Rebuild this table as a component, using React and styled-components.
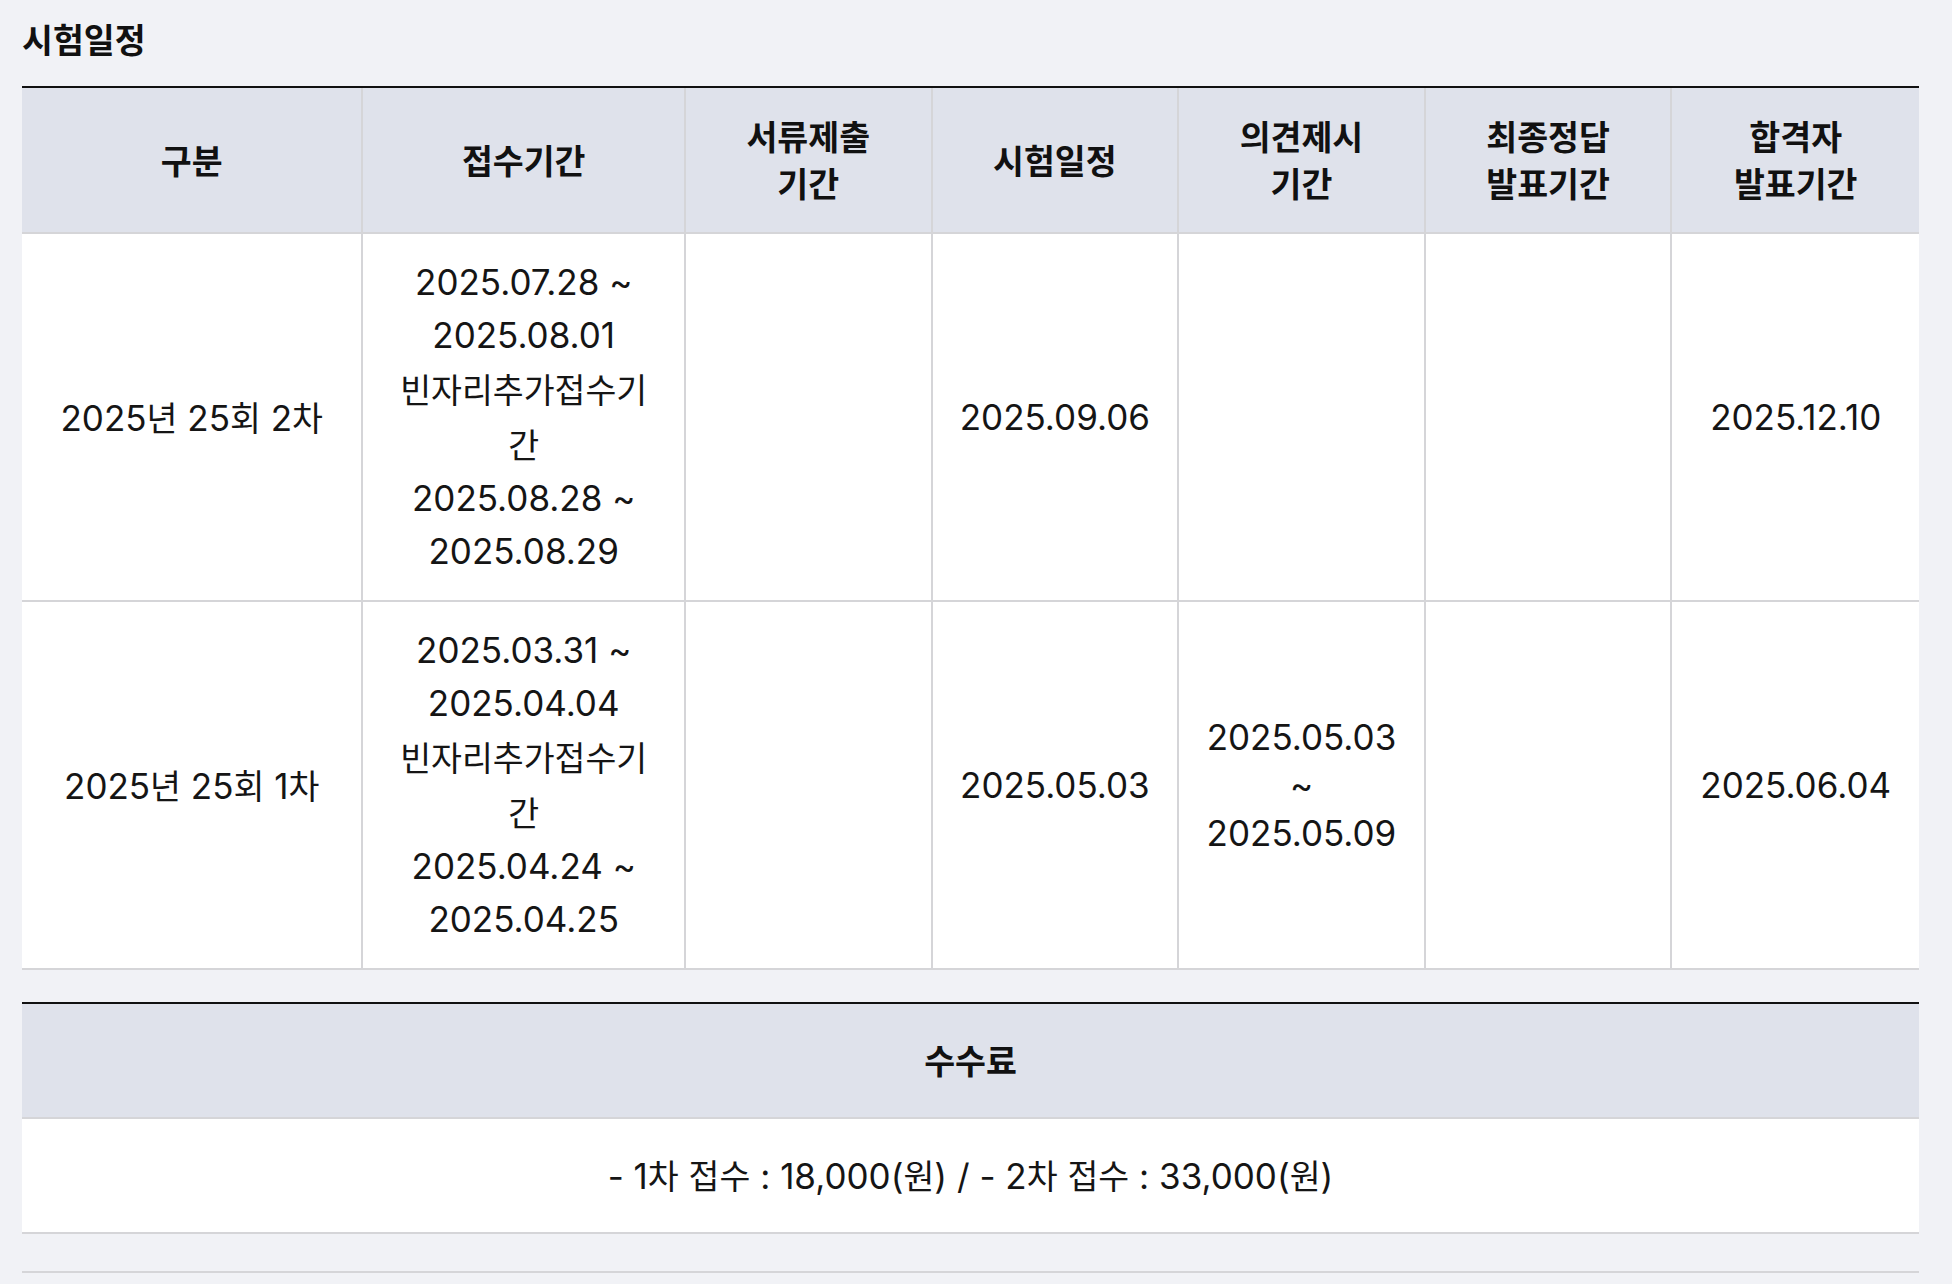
import React from 'react'
import styled, { createGlobalStyle } from 'styled-components'

const GlobalStyle = createGlobalStyle`
html, body {
    margin: 0;
    padding: 0;
    background: #f1f2f6;
}
body {
    font-family: Inter, "Noto Sans CJK KR", sans-serif;
    color: #111;
}
`

// hangul runs get their own span so they keep pretendard-like proportions
const HANGUL = /([\u1100-\u11ff\u3130-\u318f\uac00-\ud7a3]+)/

const Txt = ({ children }) => {
    return String(children).split(HANGUL).map((part, i) => (
        HANGUL.test(part) ? <Hangul key={i}>{part}</Hangul> : part
    ))
}

const COLUMNS = ['18%', '17%', '13%', '13%', '13%', '13%', '13%']

const HEADS = [
    ['구분'],
    ['접수기간'],
    ['서류제출', '기간'],
    ['시험일정'],
    ['의견제시', '기간'],
    ['최종정답', '발표기간'],
    ['합격자', '발표기간'],
]

const ROWS = [
    {
        name: '2025년 25회 2차',
        apply: ['2025.07.28 ~ 2025.08.01', '빈자리추가접수기간', '2025.08.28 ~ 2025.08.29'],
        docs: '',
        exam: '2025.09.06',
        opinion: '',
        answer: '',
        pass: '2025.12.10',
    },
    {
        name: '2025년 25회 1차',
        apply: ['2025.03.31 ~ 2025.04.04', '빈자리추가접수기간', '2025.04.24 ~ 2025.04.25'],
        docs: '',
        exam: '2025.05.03',
        opinion: '2025.05.03 ~ 2025.05.09',
        answer: '',
        pass: '2025.06.04',
    },
]

const Lines = ({ lines }) => lines.map((line, j) => (
    <React.Fragment key={j}>
        {j > 0 && <br />}
        <Txt>{line}</Txt>
    </React.Fragment>
))

const App = () => {
    return (
        <Page>
            <GlobalStyle />
            <Title><Txt>시험일정</Txt></Title>
            <Table>
                <colgroup>
                    {COLUMNS.map((w, i) => <Col key={i} $width={w} />)}
                </colgroup>
                <thead>
                    <tr>
                        {HEADS.map((lines, i) => (
                            <Th key={i}><Lines lines={lines} /></Th>
                        ))}
                    </tr>
                </thead>
                <tbody>
                    {ROWS.map((row, i) => (
                        <tr key={i}>
                            <Td><Txt>{row.name}</Txt></Td>
                            <Td $tall><Lines lines={row.apply} /></Td>
                            <Td><Txt>{row.docs}</Txt></Td>
                            <Td><Txt>{row.exam}</Txt></Td>
                            <Td><Txt>{row.opinion}</Txt></Td>
                            <Td><Txt>{row.answer}</Txt></Td>
                            <Td><Txt>{row.pass}</Txt></Td>
                        </tr>
                    ))}
                </tbody>
            </Table>

            <FeeTable>
                <thead>
                    <tr>
                        <FeeTh><Txt>수수료</Txt></FeeTh>
                    </tr>
                </thead>
                <tbody>
                    <tr>
                        <FeeTd><Txt>- 1차 접수 : 18,000(원) / - 2차 접수 : 33,000(원)</Txt></FeeTd>
                    </tr>
                </tbody>
            </FeeTable>
            <Divider />
        </Page>
    )
}

export default App

const Page = styled.div`
width: 1897px;
padding: 15px 0 40px 22px;
`
const Hangul = styled.span`
font-family: "Noto Sans CJK KR", sans-serif;
font-size: 0.96em;
`
const Title = styled.h2`
margin: 0 0 22px;
font-size: 35px;
line-height: 48px;
font-weight: 700;
color: #111;
`
const Table = styled.table`
width: 100%;
table-layout: fixed;
border-collapse: separate;
border-spacing: 0;
border-top: 2px solid #111;
`
const Col = styled.col`
width: ${props => props.$width};
`
const Th = styled.th`
padding: 25px 24px 25px;
background: #dfe2eb;
font-size: 35px;
line-height: 46px;
font-weight: 700;
color: #111;
text-align: center;
vertical-align: middle;
border-right: 2px solid #d5d5d8;
border-bottom: 2px solid #d5d5d8;
&:last-child {
    border-right: 0;
}
`
const Td = styled.td`
padding: 22px 24px;
background: #fff;
font-size: 35px;
line-height: ${props => props.$tall ? "53px" : "48px"};
font-weight: 400;
color: #151515;
text-align: center;
vertical-align: middle;
border-right: 2px solid #d5d5d8;
border-bottom: 2px solid #d5d5d8;
&:last-child {
    border-right: 0;
}
`
const FeeTable = styled(Table)`
margin-top: 32px;
`
const FeeTh = styled(Th)`
padding: 32px 24px 32px;
line-height: 48px;
`
const FeeTd = styled(Td)`
padding: 32px 24px 32px;
`
const Divider = styled.div`
margin-top: 37px;
height: 2px;
background: #d5d5d8;
`
